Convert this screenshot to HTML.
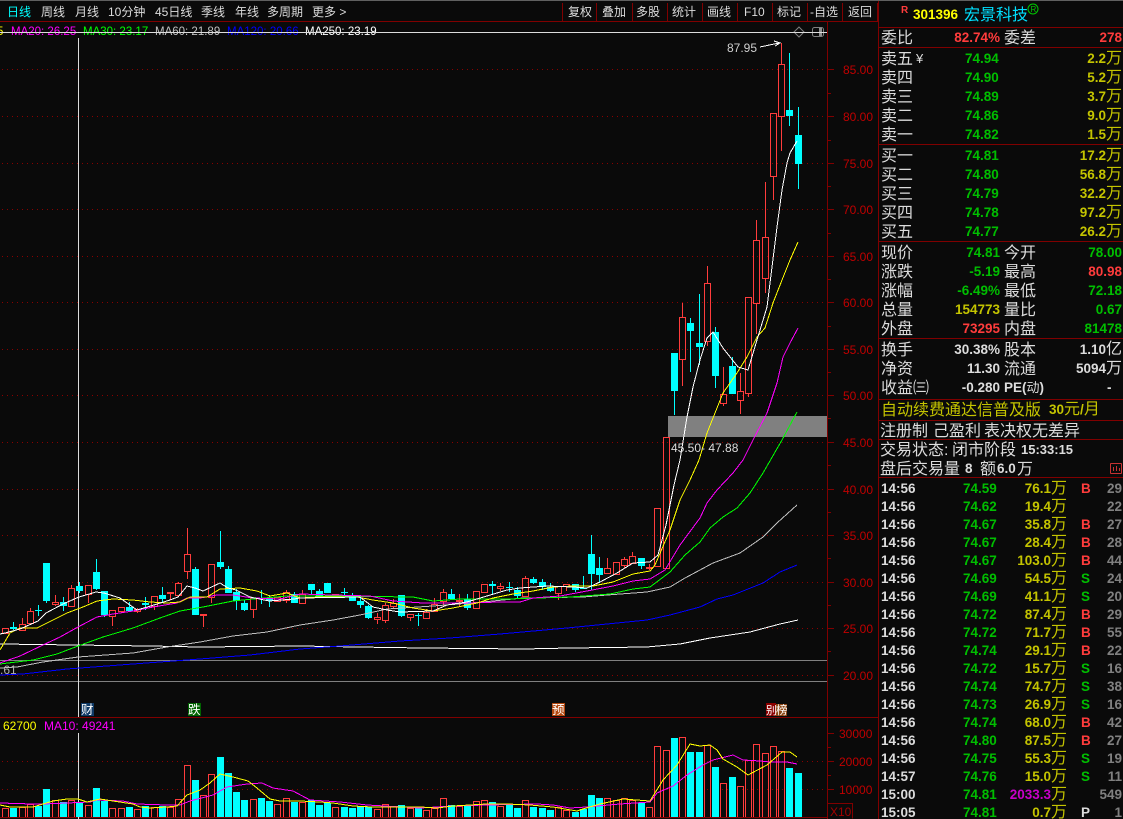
<!DOCTYPE html>
<html><head><meta charset="utf-8"><style>
html,body{margin:0;padding:0;background:#0a0a0a;overflow:hidden}
svg{display:block;position:absolute;left:0;top:0}
text{font-family:"Liberation Sans","WenQuanYi Zen Hei","Noto Sans CJK SC",sans-serif}
.c{font-family:"Liberation Sans","WenQuanYi Zen Hei","Noto Sans CJK SC",sans-serif;font-size:16px;font-weight:400}
.n{font-size:13.5px;font-weight:700}
.g{fill:#00be00}.y{fill:#c4c400}.r{fill:#ff3c3c}.w{fill:#dcdcdc}.p{fill:#808080}.m{fill:#c800c8}
.e{text-anchor:end}
.t{font-size:12px;fill:#dcdcdc}
.a{font-size:12px;fill:#c00000}
.l{font-size:11.5px}
</style></head><body>
<svg width="1123" height="819" viewBox="0 0 1123 819" xmlns="http://www.w3.org/2000/svg">
<rect width="1123" height="819" fill="#0a0a0a"/>
<rect width="1123" height="1" fill="#606060"/>
<g shape-rendering="crispEdges" fill="none">
<path stroke="#8b0000" stroke-dasharray="1 4" d="M2 69.5H827M2 116.5H827M2 163.5H827M2 209.5H827M2 256.5H827M2 302.5H827M2 349.5H827M2 395.5H827M2 442.5H827M2 489.5H827M2 535.5H827M2 582.5H827M2 628.5H827M2 675.5H827M2 761.5H827M2 789.5H827"/>
<path stroke="#800000" d="M0 21.5H878M0 717.5H878M0 817.5H827M827.5 22V819M878.5 1V819M878 27.5H1123M878 47.5H1123M878 144.5H1123M878 241.5H1123M878 338.5H1123M878 399.5H1123M878 420.5H1123M878 439.5H1123M878 477.5H1123M562.5 3V21M596.5 3V21M632.5 3V21M667.5 3V21M702.5 3V21M737.5 3V21M772.5 3V21M807.5 3V21M842.5 3V21M877.5 3V21M828 69.5h6M828 116.5h6M828 163.5h6M828 209.5h6M828 256.5h6M828 302.5h6M828 349.5h6M828 395.5h6M828 442.5h6M828 489.5h6M828 535.5h6M828 582.5h6M828 628.5h6M828 675.5h6M828 93.5h3M828 140.5h3M828 186.5h3M828 233.5h3M828 279.5h3M828 326.5h3M828 372.5h3M828 418.5h3M828 465.5h3M828 512.5h3M828 558.5h3M828 605.5h3M828 651.5h3M828 733.5h6M828 761.5h6M828 789.5h6M828 747.5h3M828 775.5h3M827.5 803.5h25v15"/>
<path stroke="#808080" d="M0 660.5H827M0 681.5H827"/>
<rect x="668" y="416" width="159" height="21" fill="#808080"/>
<path stroke="#dcdcdc" d="M78.5 38V717M78.5 733V819"/>
<path stroke="#ff3c3c" d="M2.5 628.5h6v5h-6zM19.5 624.5h6v6h-6zM22.5 618v6M27.5 611.5h6v12h-6zM30.5 608v3M52.5 602.5h6v2h-6zM55.5 595v7M55.5 605v1M68.5 588.5h6v18h-6zM71.5 585v3M85.5 585.5h6v9h-6zM88.5 595v8M109.5 610.5h6v6h-6zM112.5 617v9M118.5 607.5h6v4h-6zM121.5 612v1M134.5 609.5h6v2h-6zM137.5 612v1M137.5 608v1M151.5 596.5h6v10h-6zM154.5 607v3M167.5 592.5h6v1h-6zM170.5 594v6M175.5 583.5h6v12h-6zM178.5 582v1M184.5 554.5h6v17h-6zM187.5 528v26M187.5 572v7M200.5 614.5h6v1h-6zM203.5 616v11M208.5 564.5h6v33h-6zM211.5 598v5M250.5 598.5h6v11h-6zM253.5 610v8M274.5 597.5h6v4h-6zM283.5 592.5h6v8h-6zM286.5 590v2M286.5 601v2M299.5 594.5h6v9h-6zM302.5 590v4M332.5 594.5h6v1h-6zM335.5 596v2M374.5 617.5h6v2h-6zM377.5 613v4M377.5 620v4M382.5 605.5h6v15h-6zM385.5 603v2M385.5 621v2M390.5 603.5h6v3h-6zM393.5 599v4M393.5 607v1M407.5 614.5h6v3h-6zM410.5 618v3M423.5 612.5h6v6h-6zM426.5 609v3M431.5 604.5h6v7h-6zM434.5 598v6M440.5 592.5h6v9h-6zM443.5 589v3M443.5 602v5M456.5 600.5h6v1h-6zM459.5 594v6M459.5 602v5M473.5 591.5h6v17h-6zM481.5 584.5h6v8h-6zM497.5 586.5h6v2h-6zM500.5 583v3M500.5 589v2M522.5 578.5h6v18h-6zM525.5 576v2M555.5 586.5h6v7h-6zM558.5 594v6M563.5 584.5h6v2h-6zM566.5 587v4M604.5 568.5h6v5h-6zM607.5 558v10M613.5 562.5h6v12h-6zM621.5 559.5h6v6h-6zM624.5 557v2M624.5 566v2M629.5 556.5h6v7h-6zM632.5 552v4M646.5 567.5h6v1h-6zM649.5 564v3M649.5 569v1M654.5 508.5h6v58h-6zM663.5 437.5h6v131h-6zM679.5 317.5h6v42h-6zM682.5 303v14M682.5 360v26M704.5 283.5h6v58h-6zM707.5 266v17M707.5 342v4M720.5 394.5h6v9h-6zM723.5 367v27M723.5 404v2M737.5 391.5h6v9h-6zM740.5 373v18M740.5 401v13M745.5 297.5h6v96h-6zM748.5 394v3M753.5 240.5h6v63h-6zM756.5 220v20M756.5 304v30M762.5 237.5h6v41h-6zM765.5 182v55M765.5 279v14M770.5 113.5h6v63h-6zM773.5 177v23M778.5 64.5h6v52h-6zM781.5 43v21M781.5 117v34"/>
<path stroke="#00ffff" d="M13.5 622V630M38.5 605V616M46.5 563V603M63.5 597V611M79.5 582V593M96.5 559V590M104.5 591V617M129.5 602V612M145.5 597V610M162.5 587V602M195.5 567V615M220.5 531V569M228.5 566V593M236.5 589V610M244.5 600V611M261.5 590V604M269.5 595V607M294.5 592V603M311.5 584V595M319.5 589V598M344.5 588V598M352.5 593V601M360.5 597V608M368.5 605V619M401.5 595V617M418.5 613V626M451.5 589V600M467.5 594V610M492.5 581V594M509.5 582V592M517.5 587V599M533.5 577V584M542.5 579V590M550.5 583V592M575.5 584V592M583.5 576V589M591.5 535V590M599.5 557V583M641.5 558V569M674.5 353V415M690.5 318V372M699.5 294V365M715.5 327V388M732.5 357V394M789.5 53V126M798.5 107V189"/>
<path stroke="#00ffff" stroke-width="7" d="M13.5 627V629M38.5 610V611M46.5 563V601M63.5 602V606M79.5 586V591M96.5 572V589M104.5 591V615M129.5 607V611M145.5 603V605M162.5 595V599M195.5 569V615M220.5 562V567M228.5 569V593M236.5 592V601M244.5 603V610M261.5 598V599M269.5 598V601M294.5 594V603M311.5 584V590M319.5 591V597M327.5 583V593M344.5 592V593M352.5 595V601M360.5 601V605M368.5 606V618M401.5 595V616M418.5 615V616M451.5 594V599M467.5 599V608M492.5 584V586M509.5 587V588M517.5 590V596M533.5 579V583M542.5 582V587M550.5 587V591M575.5 584V590M583.5 588V589M591.5 554V574M599.5 568V575M641.5 558V566M674.5 353V391M690.5 323V331M699.5 343V347M715.5 332V376M732.5 366V394M789.5 110V116M798.5 135V164"/>
<polyline stroke="#ffffff" points="0,644 150,646 200,647 300,646 357,647 423,648 523,649 570,648 647,647 680,644 710,638 750,632 780,624 798,620"/>
<polyline stroke="#0000ff" points="0,675 23,674 67,669 133,664 200,659 250,655 300,649 340,646 400,641 450,638 500,634 567,628 647,620 670,615 700,607 717,599 733,595 763,583 780,572 797,565"/>
<polyline stroke="#c0c0c0" points="0,668 17,667 43,662 78,657 133,653 167,647 200,642 233,636 267,632 300,625 333,620 360,615 387,609 433,606 483,602 523,598 583,597 607,595 647,592 670,587 685,578 700,570 713,563 740,553 763,537 777,523 797,505"/>
<polyline stroke="#00ff00" points="0,664 33,660 57,654 78,646 103,637 133,628 160,618 180,611 203,607 233,601 253,599 287,596 333,596 413,597 433,601 460,599 507,599 570,597 610,594 633,589 650,587 670,572 685,555 700,542 710,528 723,517 737,508 750,493 763,473 782,440 797,412"/>
<polyline stroke="#ff00ff" points="0,663 20,656 43,645 60,637 78,627 97,617 113,614 133,611 153,607 177,603 187,598 200,598 217,595 233,595 253,598 280,599 300,594 333,595 370,596 393,601 423,603 467,603 500,602 520,602 533,598 560,596 587,591 613,586 633,581 650,579 665,570 680,545 700,518 707,503 717,490 733,473 743,460 753,440 767,413 777,383 783,357 790,343 798,328"/>
<polyline stroke="#ffff00" points="0,650 10,633 20,628 37,628 47,623 67,613 83,607 97,601 113,599 133,600 150,602 167,603 180,602 190,597 207,597 220,589 240,588 257,591 270,596 287,593 300,598 320,597 357,597 373,600 393,603 413,608 433,611 453,608 477,603 493,598 513,594 533,591 553,587 573,586 593,586 613,582 633,574 650,571 655,565 670,530 680,500 690,480 699,460 707,433 715,413 723,393 737,373 747,357 757,337 765,328 773,303 782,280 790,260 798,242"/>
<polyline stroke="#ffffff" points="0,634 5,633 20,629 38,621 46,613 63,604 79,597 96,592 104,593 120,598 137,610 154,605 170,600 178,597 187,586 195,588 203,591 220,583 228,588 236,590 250,597 269,601 294,599 300,598 360,597 373,607 387,610 400,612 433,611 447,605 467,602 487,596 507,590 520,588 547,586 573,587 587,588 600,582 617,573 633,563 650,562 658,555 666,525 674,485 680,460 687,417 693,387 700,360 707,338 713,332 723,348 738,367 748,370 757,340 767,307 772,267 777,227 782,190 787,163 790,153 797,141"/>
<polyline stroke="#ffffff" points="760,47 779,43"/>
<path stroke="#ffffff" d="M774 41l6 2-5 3"/>
<path stroke="#ff3c3c" d="M2.5 817V808.5h6V817M19.5 817V807.5h6V817M27.5 817V804.5h6V817M52.5 817V800.5h6V817M68.5 817V800.5h6V817M85.5 817V805.5h6V817M109.5 817V808.5h6V817M118.5 817V808.5h6V817M134.5 817V809.5h6V817M151.5 817V807.5h6V817M167.5 817V807.5h6V817M175.5 817V799.5h6V817M184.5 817V765.5h6V817M200.5 817V795.5h6V817M208.5 817V774.5h6V817M250.5 817V799.5h6V817M274.5 817V804.5h6V817M283.5 817V798.5h6V817M299.5 817V802.5h6V817M332.5 817V807.5h6V817M374.5 817V809.5h6V817M382.5 817V804.5h6V817M390.5 817V806.5h6V817M407.5 817V808.5h6V817M423.5 817V810.5h6V817M431.5 817V808.5h6V817M440.5 817V798.5h6V817M456.5 817V806.5h6V817M473.5 817V801.5h6V817M481.5 817V800.5h6V817M497.5 817V806.5h6V817M522.5 817V800.5h6V817M555.5 817V807.5h6V817M563.5 817V810.5h6V817M604.5 817V798.5h6V817M613.5 817V800.5h6V817M621.5 817V798.5h6V817M629.5 817V800.5h6V817M646.5 817V807.5h6V817M654.5 817V746.5h6V817M663.5 817V750.5h6V817M679.5 817V737.5h6V817M704.5 817V745.5h6V817M720.5 817V783.5h6V817M737.5 817V786.5h6V817M745.5 817V760.5h6V817M753.5 817V744.5h6V817M762.5 817V753.5h6V817M770.5 817V746.5h6V817M778.5 817V751.5h6V817"/>
<path stroke="#00ffff" stroke-width="7" d="M13.5 817V808M38.5 817V806M46.5 817V789M63.5 817V802M79.5 817V803M96.5 817V788M104.5 817V801M129.5 817V807M145.5 817V806M162.5 817V806M195.5 817V780M220.5 817V757M228.5 817V773M236.5 817V792M244.5 817V800M261.5 817V798M269.5 817V801M294.5 817V802M311.5 817V800M319.5 817V805M327.5 817V803M344.5 817V807M352.5 817V808M360.5 817V806M368.5 817V807M401.5 817V805M418.5 817V807M451.5 817V805M467.5 817V806M492.5 817V802M509.5 817V805M517.5 817V808M533.5 817V807M542.5 817V808M550.5 817V810M575.5 817V812M583.5 817V809M591.5 817V795M599.5 817V798M641.5 817V803M674.5 817V738M690.5 817V752M699.5 817V752M715.5 817V767M732.5 817V777M789.5 817V768M798.5 817V773"/>
<polyline stroke="#ff00ff" points="0,803 33,804 43,804 67,803 90,802 97,800 123,801 137,804 167,805 180,805 190,801 213,795 227,787 247,784 262,783 273,788 293,791 310,800 340,802 367,805 420,808 437,807 453,806 487,805 537,804 553,805 570,808 587,807 620,804 650,802 657,793 673,786 687,775 703,765 713,760 733,755 743,760 760,761 770,762 787,762 797,764"/>
<polyline stroke="#ffff00" points="0,805 10,807 33,807 43,804 53,801 67,799 78,799 87,802 100,799 113,801 133,804 140,807 150,808 167,807 177,806 187,795 200,790 210,783 220,774 233,777 248,781 257,788 270,799 280,801 300,801 320,802 333,803 353,806 372,807 383,807 420,807 437,808 453,806 487,804 507,804 530,805 553,807 577,811 583,809 600,804 623,799 650,801 663,780 677,765 690,744 700,746 710,745 717,750 723,759 737,767 748,775 767,765 782,752 790,752 797,757"/>
</g>
<g fill="none" stroke="#808080">
<path d="M799 27l5 5-5 5-5-5z"/>
<rect x="812.5" y="27.5" width="11" height="9" rx="2"/>
</g>
<rect x="819" y="28" width="3" height="8" fill="#909090"/>
<text class="t" x="7" y="16" style="fill:#00ffff">日线</text>
<text class="t" x="41" y="16">周线</text>
<text class="t" x="75" y="16">月线</text>
<text class="t" x="108" y="16">10分钟</text>
<text class="t" x="155" y="16">45日线</text>
<text class="t" x="201" y="16">季线</text>
<text class="t" x="235" y="16">年线</text>
<text class="t" x="267" y="16">多周期</text>
<text class="t" x="312" y="16">更多 &gt;</text>
<text class="t" x="568" y="16">复权</text>
<text class="t" x="602" y="16">叠加</text>
<text class="t" x="636" y="16">多股</text>
<text class="t" x="672" y="16">统计</text>
<text class="t" x="707" y="16">画线</text>
<text class="t" x="744" y="16">F10</text>
<text class="t" x="777" y="16">标记</text>
<text class="t" x="810" y="16">-自选</text>
<text class="t" x="848" y="16">返回</text>
<text class="l" x="-3" y="35" fill="#ffff00">5</text>
<text class="l" x="11" y="35" fill="#ff00ff">MA20: 26.25</text>
<text class="l" x="83" y="35" fill="#00ff00">MA30: 23.17</text>
<text class="l" x="155" y="35" fill="#c0c0c0">MA60: 21.89</text>
<text class="l" x="227" y="35" fill="#0000ff">MA120: 20.66</text>
<text class="l" x="305" y="35" fill="#ffffff">MA250: 23.19</text>
<path d="M0 32.5H827" stroke="#dcdcdc" shape-rendering="crispEdges"/>
<text x="727" y="52" style="font-size:12px" fill="#d0d0d0">87.95</text>
<text x="671" y="452" style="font-size:12px" fill="#dcdcdc">45.50- 47.88</text>
<text x="0" y="674" style="font-size:12px" fill="#b0b0b0">.61</text>
<text class="a" x="843" y="74">85.00</text><text class="a" x="843" y="121">80.00</text><text class="a" x="843" y="168">75.00</text><text class="a" x="843" y="214">70.00</text><text class="a" x="843" y="261">65.00</text><text class="a" x="843" y="307">60.00</text><text class="a" x="843" y="354">55.00</text><text class="a" x="843" y="400">50.00</text><text class="a" x="843" y="447">45.00</text><text class="a" x="843" y="494">40.00</text><text class="a" x="843" y="540">35.00</text><text class="a" x="843" y="587">30.00</text><text class="a" x="843" y="633">25.00</text><text class="a" x="843" y="680">20.00</text>
<text class="a" x="839" y="738">30000</text><text class="a" x="839" y="766">20000</text><text class="a" x="839" y="794">10000</text>
<text x="830" y="816" style="font-size:12px" fill="#a00000">X10</text>
<rect x="81" y="703" width="13" height="13" fill="#0f3a66"/><text x="81" y="714" style="font-size:12.5px" fill="#fff">财</text>
<rect x="188" y="703" width="13" height="13" fill="#006400"/><text x="188" y="714" style="font-size:12.5px" fill="#fff">跌</text>
<rect x="552" y="703" width="13" height="13" fill="#b4480f"/><text x="552" y="714" style="font-size:12.5px" fill="#fff">预</text>
<rect x="766" y="703" width="10" height="13" fill="#8b0000"/><rect x="776" y="704" width="11" height="12" fill="#8b4513"/><text x="766" y="714" style="font-size:11px" fill="#fff">别</text><text x="776" y="714" style="font-size:11.5px" fill="#fff">榜</text>
<text x="3" y="730" style="font-size:12px" fill="#ffff00">62700</text>
<text x="44" y="730" style="font-size:12px" fill="#ff00ff">MA10: 49241</text>
<text x="901" y="13" style="font-size:10px;font-weight:700" fill="#ff3c3c">R</text>
<text x="913" y="19" style="font-size:13.5px;font-weight:700" fill="#ffff00">301396</text>
<text class="c" x="964" y="20" style="fill:#00e0ff">宏景科技</text>
<circle cx="1033" cy="9" r="5" fill="none" stroke="#00c800"/><text x="1030.5" y="12" style="font-size:8px" fill="#00c800">R</text>
<text class="c w" x="881" y="43">委比</text><text class="n r e" x="1000" y="42">82.74%</text><text class="c w" x="1004" y="43">委差</text><text class="n r e" x="1122" y="42">278</text>
<text class="c w" x="881" y="64">卖五</text><text x="916" y="63" style="font-size:13px" fill="#dcdcdc">¥</text>
<text class="c w" x="881" y="83">卖四</text><text class="c w" x="881" y="102">卖三</text><text class="c w" x="881" y="121">卖二</text><text class="c w" x="881" y="140">卖一</text>
<text class="n g" x="965" y="63">74.94</text><text class="n g" x="965" y="82">74.90</text><text class="n g" x="965" y="101">74.89</text><text class="n g" x="965" y="120">74.86</text><text class="n g" x="965" y="139">74.82</text>
<text class="n y e" x="1122" y="63">2.2<tspan class="c">万</tspan></text><text class="n y e" x="1122" y="82">5.2<tspan class="c">万</tspan></text><text class="n y e" x="1122" y="101">3.7<tspan class="c">万</tspan></text><text class="n y e" x="1122" y="120">9.0<tspan class="c">万</tspan></text><text class="n y e" x="1122" y="139">1.5<tspan class="c">万</tspan></text>
<text class="c w" x="881" y="161">买一</text><text class="c w" x="881" y="180">买二</text><text class="c w" x="881" y="199">买三</text><text class="c w" x="881" y="218">买四</text><text class="c w" x="881" y="237">买五</text>
<text class="n g" x="965" y="160">74.81</text><text class="n g" x="965" y="179">74.80</text><text class="n g" x="965" y="198">74.79</text><text class="n g" x="965" y="217">74.78</text><text class="n g" x="965" y="236">74.77</text>
<text class="n y e" x="1122" y="160">17.2<tspan class="c">万</tspan></text><text class="n y e" x="1122" y="179">56.8<tspan class="c">万</tspan></text><text class="n y e" x="1122" y="198">32.2<tspan class="c">万</tspan></text><text class="n y e" x="1122" y="217">97.2<tspan class="c">万</tspan></text><text class="n y e" x="1122" y="236">26.2<tspan class="c">万</tspan></text>
<text class="c w" x="881" y="258">现价</text><text class="n g e" x="1000" y="257">74.81</text><text class="c w" x="1004" y="258">今开</text><text class="n g e" x="1122" y="257">78.00</text>
<text class="c w" x="881" y="277">涨跌</text><text class="n g e" x="1000" y="276">-5.19</text><text class="c w" x="1004" y="277">最高</text><text class="n r e" x="1122" y="276">80.98</text>
<text class="c w" x="881" y="296">涨幅</text><text class="n g e" x="1000" y="295">-6.49%</text><text class="c w" x="1004" y="296">最低</text><text class="n g e" x="1122" y="295">72.18</text>
<text class="c w" x="881" y="315">总量</text><text class="n y e" x="1000" y="314">154773</text><text class="c w" x="1004" y="315">量比</text><text class="n g e" x="1122" y="314">0.67</text>
<text class="c w" x="881" y="334">外盘</text><text class="n r e" x="1000" y="333">73295</text><text class="c w" x="1004" y="334">内盘</text><text class="n g e" x="1122" y="333">81478</text>
<text class="c w" x="881" y="355">换手</text><text class="n w e" x="1000" y="354">30.38%</text><text class="c w" x="1004" y="355">股本</text><text class="n w e" x="1122" y="354">1.10<tspan class="c">亿</tspan></text>
<text class="c w" x="881" y="374">净资</text><text class="n w e" x="1000" y="373">11.30</text><text class="c w" x="1004" y="374">流通</text><text class="n w e" x="1122" y="373">5094<tspan class="c">万</tspan></text>
<text class="c w" x="881" y="393">收益㈢</text><text class="n w e" x="1000" y="392">-0.280</text><text class="n w" x="1004" y="392">PE(<tspan class="c" style="font-size:13px">动</tspan>)</text><text class="n w" x="1107" y="392">-</text>
<text class="c y" x="881" y="415">自动续费通达信普及版</text><text class="n y" x="1049" y="414">30<tspan class="c">元</tspan>/<tspan class="c">月</tspan></text>
<text class="c w" x="880" y="436">注册制</text><text class="c w" x="933" y="436">己盈利</text><text class="c w" x="984" y="436">表决权无差异</text>
<text class="c w" x="880" y="455">交易状态:</text><text class="c w" x="952" y="455">闭市阶段</text><text class="n w" x="1021" y="454" style="font-size:13px">15:33:15</text>
<text class="c w" x="880" y="474">盘后交易量</text><text class="n w" x="965" y="473">8</text><text class="c w" x="980" y="474">额</text><text class="n w" x="997" y="473">6.0</text><text class="c w" x="1017" y="474">万</text>
<g shape-rendering="crispEdges" fill="none" stroke="#c83232"><rect x="1110.5" y="463.5" width="11" height="10" rx="1"/><path d="M1113.5 471v-4M1116.5 471v-5M1119.5 471v-3"/></g>
<g class="n">
<text class="w" x="881" y="493">14:56</text><text class="g" x="963" y="493">74.59</text><text class="y e" x="1067" y="493">76.1<tspan class="c">万</tspan></text><text class="r" x="1081" y="493">B</text><text class="p e" x="1122" y="493">29</text>
<text class="w" x="881" y="511">14:56</text><text class="g" x="963" y="511">74.62</text><text class="y e" x="1067" y="511">19.4<tspan class="c">万</tspan></text><text class="p e" x="1122" y="511">22</text>
<text class="w" x="881" y="529">14:56</text><text class="g" x="963" y="529">74.67</text><text class="y e" x="1067" y="529">35.8<tspan class="c">万</tspan></text><text class="r" x="1081" y="529">B</text><text class="p e" x="1122" y="529">27</text>
<text class="w" x="881" y="547">14:56</text><text class="g" x="963" y="547">74.67</text><text class="y e" x="1067" y="547">28.4<tspan class="c">万</tspan></text><text class="r" x="1081" y="547">B</text><text class="p e" x="1122" y="547">28</text>
<text class="w" x="881" y="565">14:56</text><text class="g" x="963" y="565">74.67</text><text class="y e" x="1067" y="565">103.0<tspan class="c">万</tspan></text><text class="r" x="1081" y="565">B</text><text class="p e" x="1122" y="565">44</text>
<text class="w" x="881" y="583">14:56</text><text class="g" x="963" y="583">74.69</text><text class="y e" x="1067" y="583">54.5<tspan class="c">万</tspan></text><text class="g" x="1081" y="583">S</text><text class="p e" x="1122" y="583">24</text>
<text class="w" x="881" y="601">14:56</text><text class="g" x="963" y="601">74.69</text><text class="y e" x="1067" y="601">41.1<tspan class="c">万</tspan></text><text class="g" x="1081" y="601">S</text><text class="p e" x="1122" y="601">20</text>
<text class="w" x="881" y="619">14:56</text><text class="g" x="963" y="619">74.72</text><text class="y e" x="1067" y="619">87.4<tspan class="c">万</tspan></text><text class="r" x="1081" y="619">B</text><text class="p e" x="1122" y="619">29</text>
<text class="w" x="881" y="637">14:56</text><text class="g" x="963" y="637">74.72</text><text class="y e" x="1067" y="637">71.7<tspan class="c">万</tspan></text><text class="r" x="1081" y="637">B</text><text class="p e" x="1122" y="637">55</text>
<text class="w" x="881" y="655">14:56</text><text class="g" x="963" y="655">74.74</text><text class="y e" x="1067" y="655">29.1<tspan class="c">万</tspan></text><text class="r" x="1081" y="655">B</text><text class="p e" x="1122" y="655">22</text>
<text class="w" x="881" y="673">14:56</text><text class="g" x="963" y="673">74.72</text><text class="y e" x="1067" y="673">15.7<tspan class="c">万</tspan></text><text class="g" x="1081" y="673">S</text><text class="p e" x="1122" y="673">16</text>
<text class="w" x="881" y="691">14:56</text><text class="g" x="963" y="691">74.74</text><text class="y e" x="1067" y="691">74.7<tspan class="c">万</tspan></text><text class="g" x="1081" y="691">S</text><text class="p e" x="1122" y="691">38</text>
<text class="w" x="881" y="709">14:56</text><text class="g" x="963" y="709">74.73</text><text class="y e" x="1067" y="709">26.9<tspan class="c">万</tspan></text><text class="g" x="1081" y="709">S</text><text class="p e" x="1122" y="709">16</text>
<text class="w" x="881" y="727">14:56</text><text class="g" x="963" y="727">74.74</text><text class="y e" x="1067" y="727">68.0<tspan class="c">万</tspan></text><text class="r" x="1081" y="727">B</text><text class="p e" x="1122" y="727">42</text>
<text class="w" x="881" y="745">14:56</text><text class="g" x="963" y="745">74.80</text><text class="y e" x="1067" y="745">87.5<tspan class="c">万</tspan></text><text class="r" x="1081" y="745">B</text><text class="p e" x="1122" y="745">27</text>
<text class="w" x="881" y="763">14:56</text><text class="g" x="963" y="763">74.75</text><text class="y e" x="1067" y="763">55.3<tspan class="c">万</tspan></text><text class="g" x="1081" y="763">S</text><text class="p e" x="1122" y="763">19</text>
<text class="w" x="881" y="781">14:57</text><text class="g" x="963" y="781">74.76</text><text class="y e" x="1067" y="781">15.0<tspan class="c">万</tspan></text><text class="g" x="1081" y="781">S</text><text class="p e" x="1122" y="781">11</text>
<text class="w" x="881" y="799">15:00</text><text class="g" x="963" y="799">74.81</text><text class="m e" x="1051" y="799">2033.3</text><text class="y c" x="1051" y="799">万</text><text class="p e" x="1122" y="799">549</text>
<text class="w" x="881" y="817">15:05</text><text class="g" x="963" y="817">74.81</text><text class="y e" x="1067" y="817">0.7<tspan class="c">万</tspan></text><text class="w" x="1081" y="817">P</text><text class="p e" x="1122" y="817">1</text>
</g>
</svg>
</body></html>
